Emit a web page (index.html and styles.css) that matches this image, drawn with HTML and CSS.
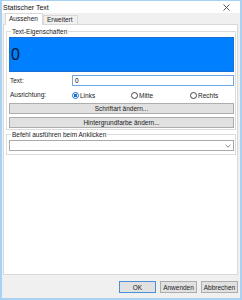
FILE: index.html
```html
<!DOCTYPE html>
<html>

<head>
  <meta charset="UTF-8">
  <title>Statischer Text</title>
  <link rel="stylesheet" href="styles.css">
</head>

<body>

  <div class="window">
    <div class="titlebar">
      <span class="title">Statischer Text</span>
      <svg class="close" width="7" height="7" viewBox="0 0 7 7">
        <path d="M0.5 0.5 L6.5 6.5 M6.5 0.5 L0.5 6.5" stroke="#444" stroke-width="0.9" />
      </svg>
    </div>

    <div class="content">
      <div class="tabs">
        <div class="tab active">Aussehen</div>
        <div class="tab">Erweitert</div>
      </div>

      <div class="panel">
        <fieldset class="group">
          <legend>Text-Eigenschaften</legend>
          <div class="preview">0</div>

          <div class="row">
            <span class="label">Text:</span>
            <div class="textbox focused">0</div>
          </div>

          <div class="row">
            <span class="label">Ausrichtung:</span>
            <div class="radios">
              <span class="radio"><span class="dot checked"></span>Links</span>
              <span class="radio"><span class="dot"></span>Mitte</span>
              <span class="radio"><span class="dot"></span>Rechts</span>
            </div>
          </div>

          <button class="button wide">Schriftart ändern...</button>
          <button class="button wide">Hintergrundfarbe ändern...</button>
        </fieldset>

        <fieldset class="group second">
          <legend>Befehl ausführen beim Anklicken</legend>
          <div class="combo">
            <svg width="6" height="4" viewBox="0 0 6 4">
              <path d="M0.5 0.8 L3 3.2 L5.5 0.8" fill="none" stroke="#666" stroke-width="0.8" />
            </svg>
          </div>
        </fieldset>
      </div>

      <div class="footer">
        <button class="button default">OK</button>
        <button class="button">Anwenden</button>
        <button class="button">Abbrechen</button>
      </div>
    </div>
  </div>

</body>

</html>
```

FILE: styles.css
```css
body {
  margin: 0;
  width: 242px;
  height: 300px;
  font-family: "Liberation Sans", Arial, sans-serif;
  font-size: 6.5px;
  color: #000;
  background-color: #fff;
}

.window {
  box-sizing: border-box;
  width: 242px;
  height: 300px;
  display: flex;
  flex-direction: column;
  border: 2px solid #a9d1f2;
  border-top: 1px solid #a9d1f2;
  background-color: #f0f0f0;
}

.titlebar {
  height: 12px;
  display: flex;
  align-items: center;
  justify-content: space-between;
  padding: 0 10px 0 1px;
  background-color: #fff;
}

.title {
  font-size: 7px;
  color: #111;
}

.close {
  display: block;
}

.content {
  flex: 1;
  display: flex;
  flex-direction: column;
  padding: 0 2px 2px 1px;
}

.tabs {
  display: flex;
  align-items: flex-end;
  height: 11px;
  padding-left: 2px;
}

.tab {
  box-sizing: border-box;
  height: 9px;
  line-height: 8px;
  padding: 0 4px 0 3px;
  border: 1px solid #d9d9d9;
  border-bottom: none;
  background-color: #f0f0f0;
  color: #222;
}

.tab.active {
  height: 12px;
  line-height: 10px;
  margin-bottom: -1px;
  padding: 0 4px 0 3px;
  background-color: #fff;
  position: relative;
  z-index: 1;
}

.panel {
  height: 251px;
  box-sizing: border-box;
  border: 1px solid #d9d9d9;
  background-color: #fff;
  padding: 2px 1px 0 2px;
}

.group {
  margin: 1px 0 0 0;
  padding: 1px 1px 1px 2px;
  border: 1px solid #dcdcdc;
  display: flex;
  flex-direction: column;
  gap: 3px;
}

.group legend {
  padding: 0 1px;
  margin-left: 2px;
  line-height: 7px;
  color: #222;
}

.group.second {
  margin-top: 1px;
  padding: 2px 1px 3px 2px;
}

.preview {
  box-sizing: border-box;
  height: 35px;
  margin-top: 1px;
  border: 1px solid #1a6fd6;
  background-color: #0080ff;
  color: #06162e;
  font-size: 16px;
  line-height: 33px;
  padding-left: 1px;
}

.row {
  display: flex;
  align-items: center;
  height: 11px;
}

.label {
  width: 62px;
  padding-left: 1px;
  color: #222;
}

.textbox {
  flex: 1;
  box-sizing: border-box;
  height: 11px;
  line-height: 9px;
  padding-left: 2px;
  border: 1px solid #adadad;
  background-color: #fff;
}

.textbox.focused {
  border-color: #6fa8e6;
}

.radios {
  flex: 1;
  display: flex;
  padding-top: 2px;
}

.radio {
  display: flex;
  align-items: center;
  gap: 1px;
  width: 59px;
  color: #222;
}

.radio:last-child {
  width: auto;
}

.dot {
  box-sizing: border-box;
  width: 7px;
  height: 7px;
  border: 1px solid #444;
  border-radius: 50%;
  background-color: #fff;
}

.dot.checked {
  border-color: #1c74d2;
  background: radial-gradient(circle, #1c74d2 0 1.6px, #fff 1.8px);
}

.button {
  box-sizing: border-box;
  height: 11px;
  padding: 0;
  border: 1px solid #adadad;
  background-color: #e1e1e1;
  font-family: inherit;
  font-size: 6.5px;
  line-height: 9px;
  color: #222;
}

.button.wide {
  width: 100%;
}

.combo {
  box-sizing: border-box;
  height: 11px;
  border: 1px solid #a9a9a9;
  background-color: #fff;
  display: flex;
  align-items: center;
  justify-content: flex-end;
  padding-right: 2px;
}

.combo svg {
  display: block;
}

.footer {
  display: flex;
  justify-content: flex-end;
  gap: 4px;
  padding: 6px 0 0 0;
}

.footer .button {
  width: 37px;
  height: 12px;
}

.footer .button.default {
  border-color: #4a90d9;
}
```
